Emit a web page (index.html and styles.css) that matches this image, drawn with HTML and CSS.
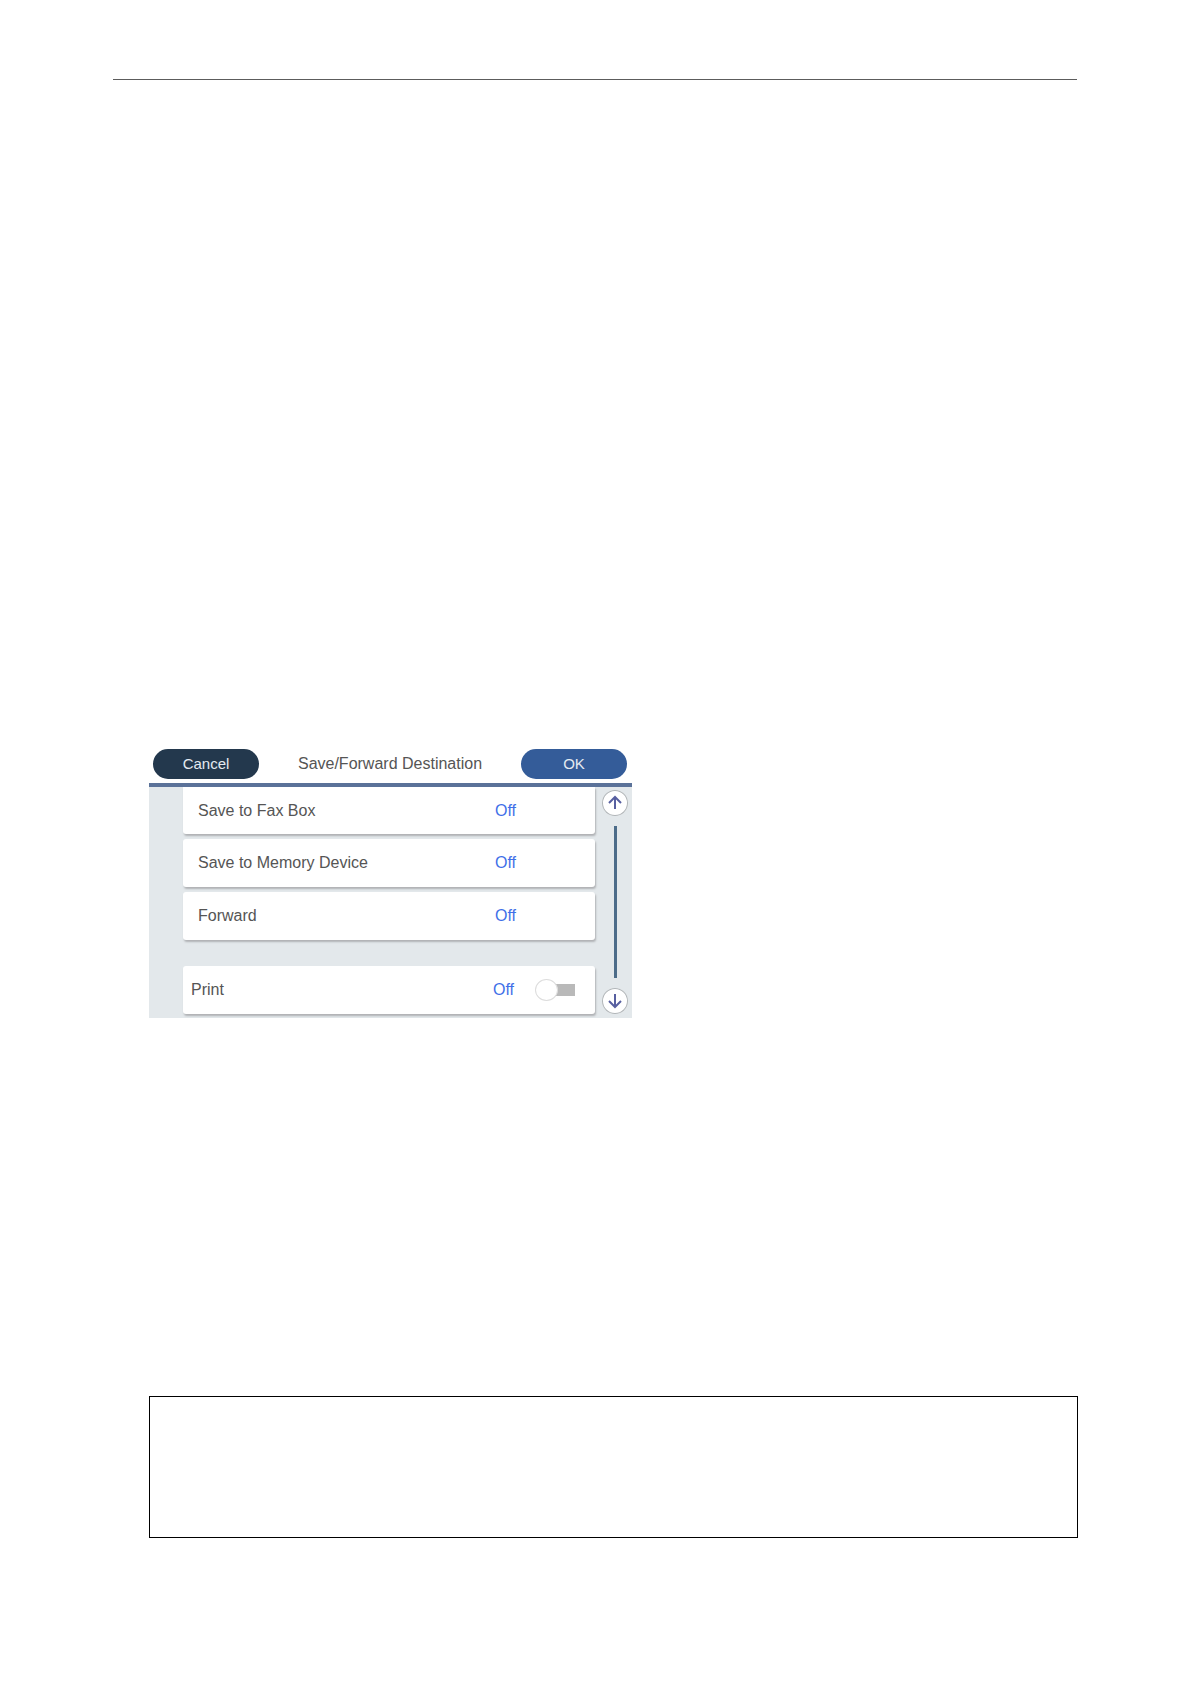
FILE: index.html
```html
<!DOCTYPE html>
<html lang="en">
<head>
<meta charset="utf-8">
<meta name="viewport" content="width=device-width, initial-scale=1">
<title>Save/Forward Destination</title>
<link rel="stylesheet" href="styles.css">
</head>
<body>
<main class="page">
  <hr class="page-rule">
  <section class="panel" aria-labelledby="panel-title">
    <header class="panel-header">
      <button class="pill pill-cancel" type="button">Cancel</button>
      <h1 class="panel-title" id="panel-title">Save/Forward Destination</h1>
      <button class="pill pill-ok" type="button">OK</button>
    </header>
    <div class="panel-body">
      <div class="settings">
        <button class="row row-first" type="button"><span>Save to Fax Box</span><span class="value">Off</span></button>
        <button class="row" type="button"><span>Save to Memory Device</span><span class="value">Off</span></button>
        <button class="row" type="button"><span>Forward</span><span class="value">Off</span></button>
        <label class="row row-print" for="print"><span>Print</span><span class="value">Off</span><input class="switch" id="print" type="checkbox" role="switch"></label>
      </div>
      <div class="rail">
        <button class="rail-button" type="button" aria-label="Scroll up">
          <svg viewBox="0 0 26 26" width="26" height="26" aria-hidden="true"><path d="M13 19V8M7 13l6-6 6 6"/></svg>
        </button>
        <div class="rail-track"></div>
        <button class="rail-button" type="button" aria-label="Scroll down">
          <svg viewBox="0 0 26 26" width="26" height="26" aria-hidden="true"><path d="M13 6v12M7 13l6 6 6-6"/></svg>
        </button>
      </div>
    </div>
  </section>
  <aside class="note-box"></aside>
</main>
</body>
</html>
```
FILE: styles.css
```css
* {
  box-sizing: border-box;
}

body {
  margin: 0;
  background: #fff;
  color: #555;
  font: 16px/20px "Liberation Sans", Arial, sans-serif;
}

button {
  border: 0;
  padding: 0;
  font: inherit;
  color: inherit;
  cursor: pointer;
}

.page {
  padding: 79px 112px 146px 113px;
}

.page-rule {
  height: 1px;
  margin: 0 1px 665px 0;
  border: 0;
  background: #5c5c5c;
}

.panel {
  max-width: 483px;
  margin-left: 36px;
}

.panel-header {
  display: flex;
  align-items: center;
  justify-content: space-between;
  height: 42px;
  padding: 0 5px 0 4px;
  border-bottom: 4px solid #5b7299;
}

.panel-title {
  margin: 0;
  font-size: 16px;
  font-weight: 400;
}

.pill {
  width: 106px;
  height: 30px;
  border-radius: 15px;
  color: #e4eaf1;
  font-size: 15px;
}

.pill-cancel {
  background: #23384d;
}

.pill-ok {
  background: #345c99;
}

.panel-body {
  display: flex;
  gap: 7px;
  padding: 0 4px 4px 34px;
  background: #e3e8eb;
}

.settings {
  display: flex;
  flex: 1;
  flex-direction: column;
  gap: 5px;
}

.row {
  display: grid;
  grid-template-columns: 1fr 41px 38px;
  align-items: center;
  height: 48px;
  padding: 0 21px 0 15px;
  border-radius: 3px;
  background: #fff;
  box-shadow: 1px 2px 2px #b0b2b5;
  text-align: left;
}

.row-first {
  height: 47px;
  border-radius: 0 0 3px 3px;
}

.row-print {
  margin-top: 21px;
  padding-left: 8px;
  padding-right: 20px;
  grid-template-columns: 1fr 42px 40px;
}

.value {
  color: #3f6fe8;
}

.switch {
  display: flex;
  align-items: center;
  appearance: none;
  width: 40px;
  height: 20px;
  margin: 0;
  background: linear-gradient(#b9b9b9, #b9b9b9) right center / 28px 12px no-repeat;
}

.switch::before {
  content: "";
  width: 21px;
  height: 20px;
  border: 1px solid #ddd;
  border-radius: 50%;
  background: #fff;
}

.rail {
  display: flex;
  flex-direction: column;
  align-items: center;
  gap: 10px;
  padding-top: 3px;
}

.rail-button {
  display: grid;
  place-items: center;
  width: 26px;
  height: 26px;
  border-radius: 50%;
  background: #fff;
  box-shadow: inset 0 0 0 1px #b0b5b8;
}

.rail-button svg {
  fill: none;
  stroke: #575fa0;
  stroke-width: 2;
}

.rail-track {
  flex: 1;
  width: 3px;
  background: #4c6c89;
}

.note-box {
  min-height: 142px;
  margin: 378px 0 0 36px;
  border: 1px solid #000;
}
```
